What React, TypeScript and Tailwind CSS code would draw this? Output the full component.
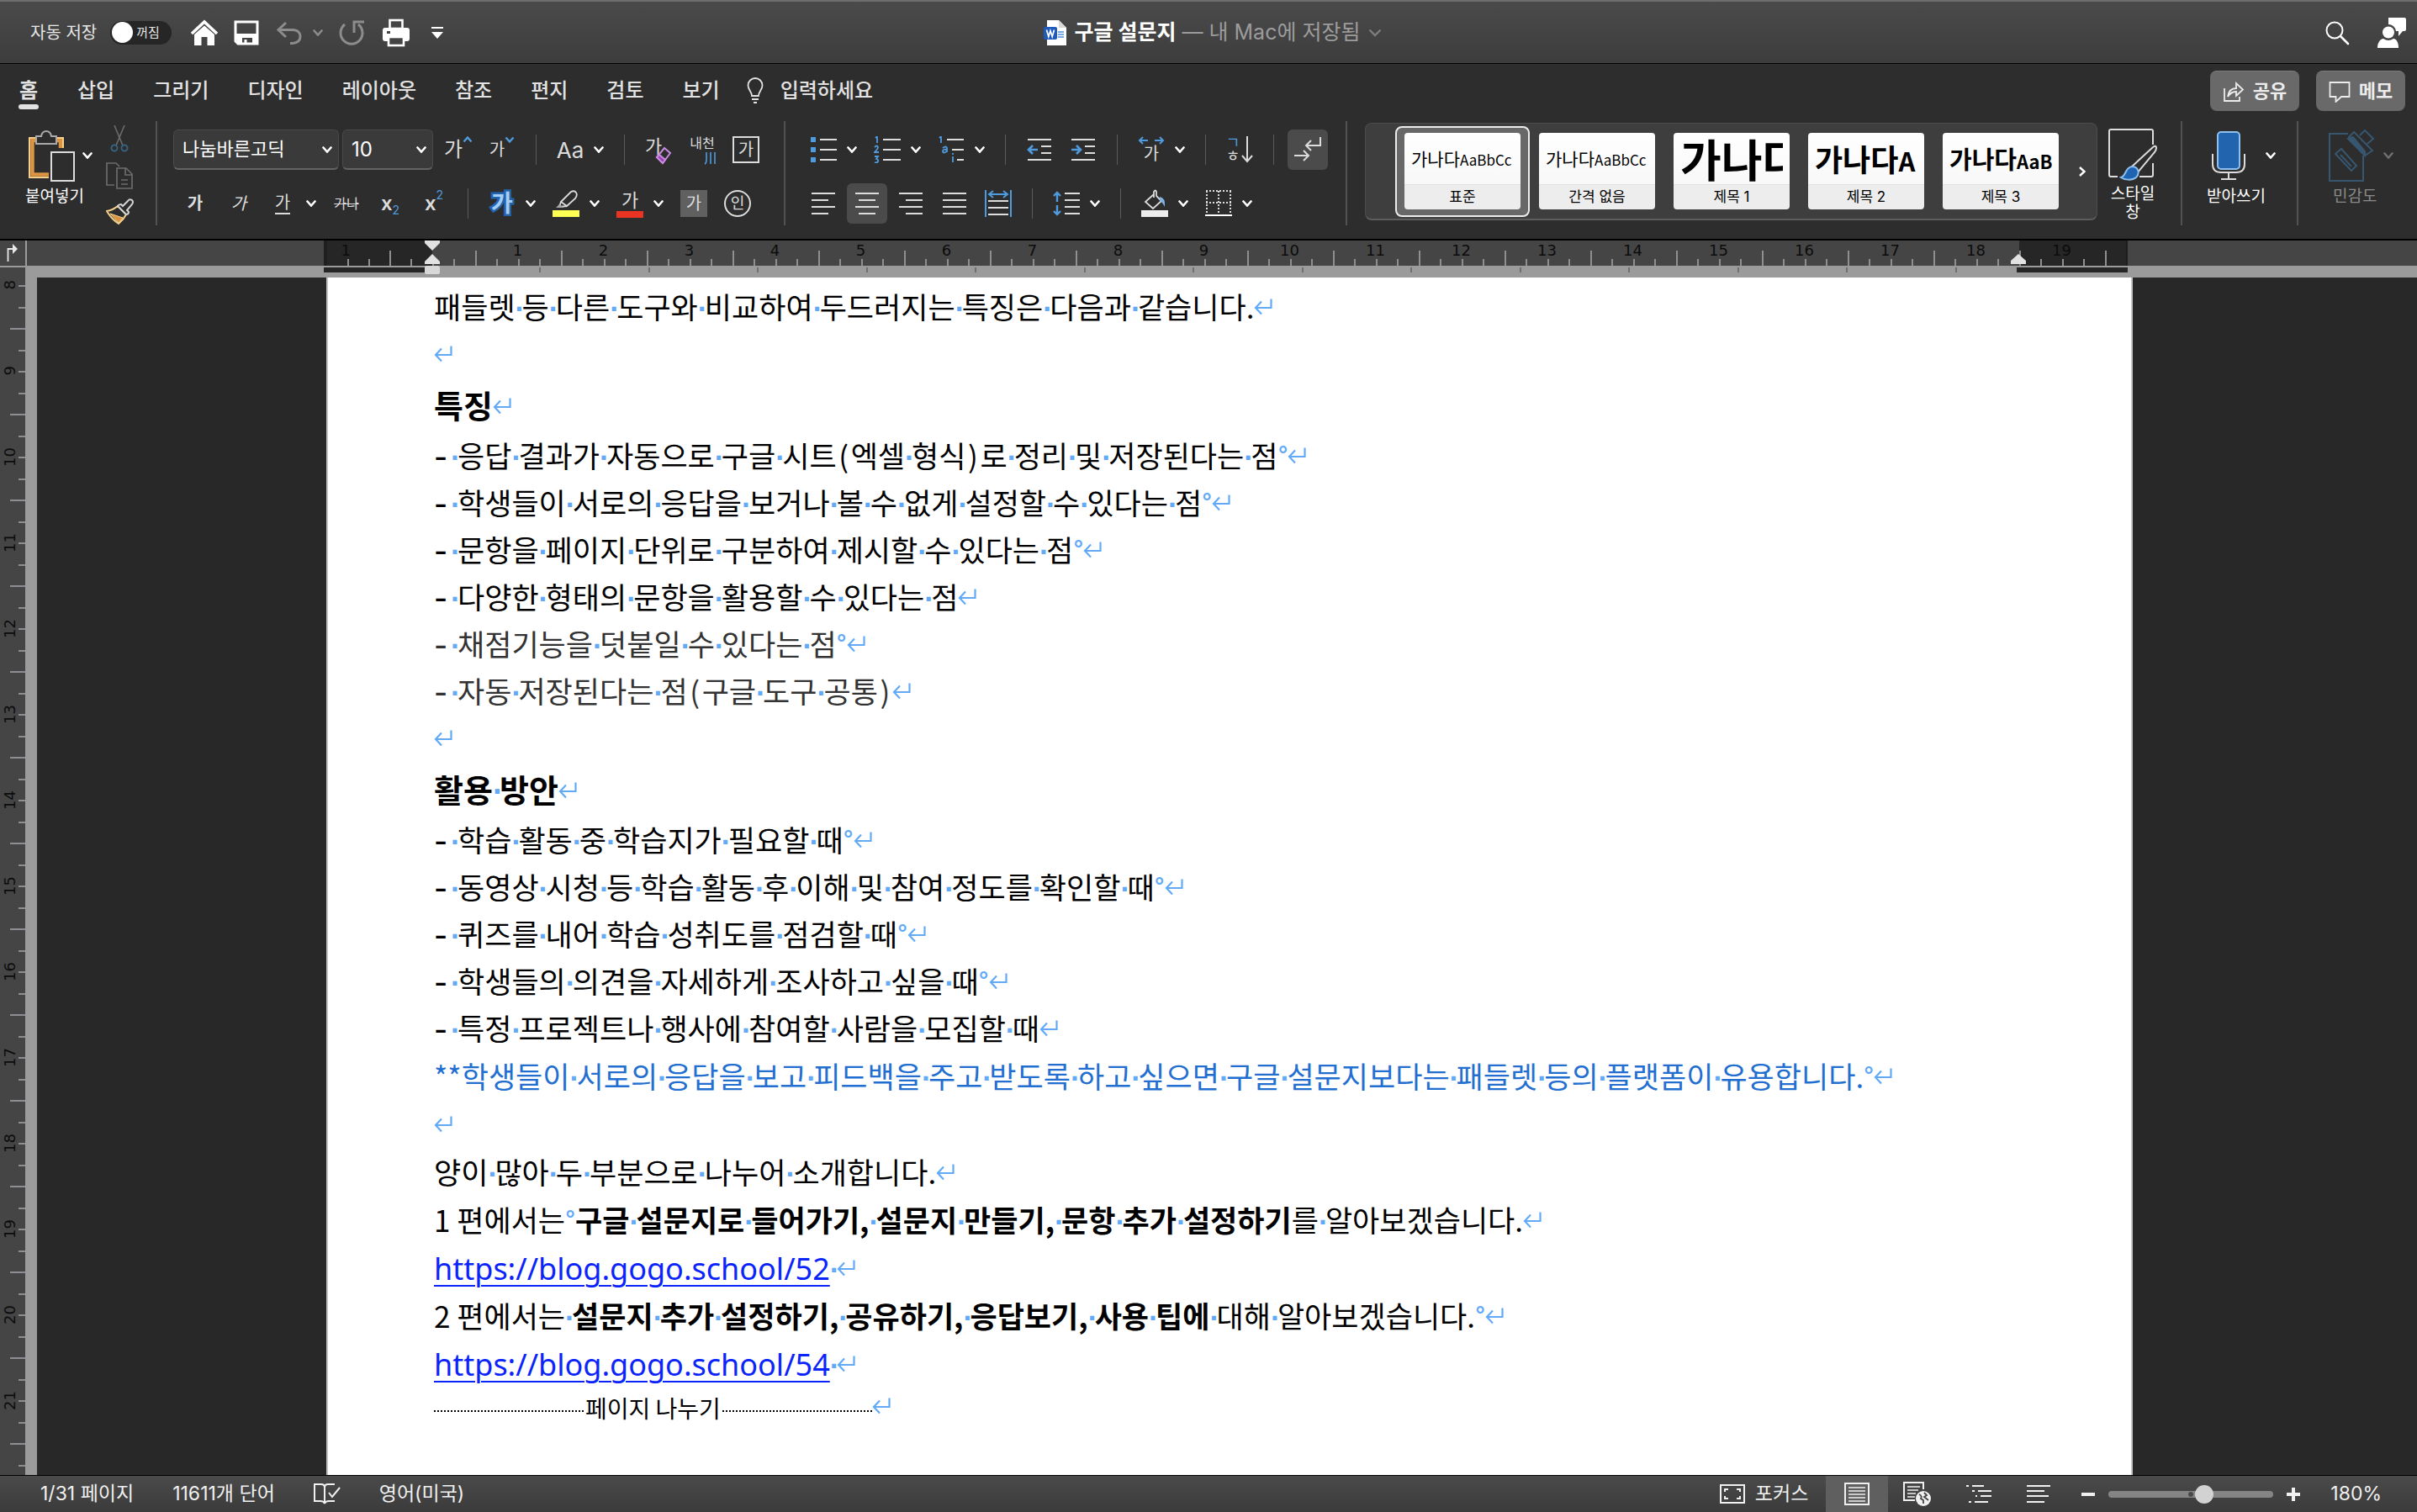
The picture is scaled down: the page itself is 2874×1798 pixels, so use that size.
import React from "react";

const UI_FONT = "font-['Inter','Noto_Sans_CJK_KR',sans-serif]";
const DOC_FONT = "font-['Noto_Sans_CJK_KR','Noto_Sans',sans-serif]";

type IconProps = {
  w: number;
  h: number;
  children: React.ReactNode;
  className?: string;
};

const Icon: React.FC<IconProps> = ({ w, h, children, className = "" }) => (
  <svg
    width={w}
    height={h}
    viewBox={`0 0 ${w} ${h}`}
    fill="none"
    stroke="currentColor"
    strokeWidth={2}
    className={`shrink-0 ${className}`}
    aria-hidden="true"
  >
    {children}
  </svg>
);

const Chevron: React.FC<{ className?: string }> = ({ className = "text-white" }) => (
  <Icon w={12} h={8} className={className}>
    <path d="M1.5 1.5 6 6.5 10.5 1.5" strokeWidth={2.6} strokeLinecap="round" />
  </Icon>
);

/* ---------- Title bar ---------- */

const TitleBar: React.FC = () => (
  <header className="grid h-[76px] shrink-0 grid-cols-[1fr_auto_1fr] items-center border-t-2 border-b border-t-[#6e6e6e] border-b-black bg-linear-to-b from-[#4a4a4a] to-[#3d3d3d] px-3">
    <div className="flex items-center pl-6 text-white">
      <label className="flex items-center gap-4 text-xl text-[#e6e6e6]">
        자동 저장
        <input type="checkbox" className="peer sr-only" />
        <span className="flex h-7 w-[73px] items-center gap-1 rounded-full bg-[#262626] px-0.5">
          <span className="h-[25px] w-[25px] rounded-full bg-white" />
          <span className="text-[15px]">꺼짐</span>
        </span>
      </label>
      <button className="ml-[22px]" aria-label="홈">
        <Icon w={34} h={32}>
          <path d="M2 17 17 3 32 17" strokeWidth={3.5} />
          <path d="M5 18 17 7.5 29 18V31H20.5V21H13.5V31H5Z" fill="currentColor" stroke="none" />
        </Icon>
      </button>
      <button className="ml-[18px]" aria-label="저장">
        <Icon w={30} h={30}>
          <path d="M2 2H28V28H5L2 25Z" strokeWidth={3} />
          <path d="M2 16H28V28H22V21H10V28H4Z" fill="currentColor" stroke="none" />
          <path d="M14 23V28" strokeWidth={3} />
        </Icon>
      </button>
      <button className="ml-5 text-[#8c8c8c]" aria-label="실행 취소">
        <Icon w={32} h={28}>
          <path d="M12 2 3 10.5 12 19M3 10.5H20C26 10.5 29 14 29 18.5C29 23 26 26 20 26.5H17" strokeWidth={3} />
        </Icon>
      </button>
      <button className="ml-3" aria-label="실행 취소 목록">
        <Chevron className="text-[#8c8c8c]" />
      </button>
      <button className="ml-[18px] text-[#8c8c8c]" aria-label="다시 실행">
        <Icon w={32} h={32}>
          <path d="M8 6A13 13 0 1 0 24 6" strokeWidth={3} />
          <path d="M19 16V3H31" strokeWidth={3} />
        </Icon>
      </button>
      <button className="ml-5" aria-label="인쇄">
        <Icon w={34} h={34}>
          <rect x="9.5" y="2" width="15" height="10" strokeWidth={2.6} />
          <rect x="1" y="11" width="32" height="16" rx="3" fill="currentColor" stroke="none" />
          <rect x="8" y="22" width="18" height="10" fill="#444" strokeWidth={2.6} />
          <rect x="6" y="15" width="4" height="3" fill="#444" stroke="none" />
        </Icon>
      </button>
      <button className="ml-6" aria-label="도구 모음 사용자 지정">
        <Icon w={16} h={16}>
          <path d="M1 2H15" />
          <path d="M1 7H15L8 15Z" fill="currentColor" stroke="none" />
        </Icon>
      </button>
    </div>

    <div className="ml-2.5 flex items-center gap-2.5">
      <svg width="27" height="30" viewBox="0 0 27 30" aria-hidden="true">
        <path d="M4 0H18L27 9V30H4Z" fill="#fff" />
        <path d="M18 0V9H27Z" fill="#d8d8d8" />
        <path d="M17 14H24M17 17H24M17 20H24" stroke="#4a8fdc" strokeWidth="1.3" />
        <rect y="8" width="16" height="15" rx="2" fill="#1e5bbd" />
        <path d="M3.5 11.5 5.8 19.5 8 12.5 10.2 19.5 12.5 11.5" fill="none" stroke="#fff" strokeWidth="1.7" />
      </svg>
      <h1 className="text-[25px]">
        <span className="font-bold text-white">구글 설문지</span>
        <span className="text-[#9c9c9c]"> — 내 Mac에 저장됨</span>
      </h1>
      <button aria-label="문서 이름">
        <Icon w={16} h={10} className="text-[#7e7e7e]">
          <path d="M1.5 1.5 8 8 14.5 1.5" strokeWidth={2.4} />
        </Icon>
      </button>
    </div>

    <div className="flex items-center justify-end gap-8 text-white">
      <button aria-label="검색">
        <Icon w={30} h={30}>
          <circle cx="12" cy="12" r="9.5" />
          <path d="M19 19 28 28" strokeWidth={2.6} strokeLinecap="round" />
        </Icon>
      </button>
      <button aria-label="계정">
        <Icon w={36} h={38}>
          <path d="M14 1H33Q35 1 35 3V15Q35 17 33 17H31L26 23V17H23A9 9 0 0 0 14 9Z" fill="currentColor" stroke="none" />
          <circle cx="14" cy="18.5" r="7" fill="currentColor" stroke="none" />
          <path d="M1 37C1 31 4 26.5 8 26Q14 30 20 26C24 26.5 26 31 26 37Z" fill="currentColor" stroke="none" />
        </Icon>
      </button>
    </div>
  </header>
);

/* ---------- Tabs ---------- */

const TABS = ["홈", "삽입", "그리기", "디자인", "레이아웃", "참조", "편지", "검토", "보기"];

const TabRow: React.FC = () => (
  <div className="flex h-16 items-end justify-between pr-3.5 pl-[22px]">
    <nav className="flex items-start gap-[46px] text-2xl font-medium text-[#e2e2e2]">
      {TABS.map((tab, i) => (
        <button key={tab} className="flex h-12 flex-col items-center">
          <span className={i === 0 ? "font-bold" : ""}>{tab}</span>
          {i === 0 && <span className="h-1.5 w-6 rounded-full bg-[#e2e2e2]" />}
        </button>
      ))}
      <button className="-ml-3.5 flex h-12 items-start gap-5">
        <Icon w={20} h={32}>
          <path d="M6 22C6 17 1.5 15 1.5 9.5A8.5 8.5 0 0 1 18.5 9.5C18.5 15 14 17 14 22Z" strokeWidth={1.8} />
          <path d="M6 26H14M8 30H12" strokeWidth={1.8} />
        </Icon>
        <span>입력하세요</span>
      </button>
    </nav>
    <div className="mb-2 flex gap-5 text-[22px] font-bold text-[#ececec]">
      <button className="flex h-12 w-[106px] items-center justify-center gap-2.5 rounded-lg border-t border-[#7c7c7c] bg-[#696969]">
        <Icon w={26} h={26}>
          <path d="M2 9V24H20V19" strokeWidth={1.8} />
          <path d="M6 19C7 12 11 9 16 9V3L24 10.5 16 18V13C12 13 9 14 6 19Z" strokeWidth={1.8} />
        </Icon>
        공유
      </button>
      <button className="flex h-12 w-[106px] items-center justify-center gap-2.5 rounded-lg border-t border-[#7c7c7c] bg-[#696969]">
        <Icon w={26} h={26}>
          <path d="M1.5 2H24.5V19H15L8.5 25V19H1.5Z" strokeWidth={1.8} />
        </Icon>
        메모
      </button>
    </div>
  </div>
);

/* ---------- Ribbon ---------- */

const GroupRule = () => <span className="mx-[19px] h-[124px] w-0.5 shrink-0 bg-[#525252]" />;
const Rule = () => <span className="mx-3.5 h-9 w-px shrink-0 bg-[#5a5a5a]" />;

type ToolProps = { label: string; children: React.ReactNode; active?: boolean };

const Tool: React.FC<ToolProps> = ({ label, children, active }) => (
  <button aria-label={label} className="flex h-12 w-[52px] shrink-0 items-center justify-center">
    <span
      className={
        active
          ? "flex h-12 w-12 items-center justify-center rounded-md bg-[#4b4b4b]"
          : "flex items-center justify-center"
      }
    >
      {children}
    </span>
  </button>
);

const SplitTool: React.FC<ToolProps> = ({ label, children }) => (
  <button aria-label={label} className="flex h-12 w-[76px] shrink-0 items-center gap-3 pl-2.5">
    <span className="flex w-8 shrink-0 items-center justify-center">{children}</span>
    <Chevron />
  </button>
);

const BLUE = "#4f9bdd";

const ClipboardGroup: React.FC = () => (
  <div className="flex h-[124px] items-start pr-1.5 pl-[30px]">
    <button className="flex w-[74px] flex-col items-start pt-2 text-[19px] leading-6 text-white">
      <span className="flex h-[66px] items-center gap-2 pl-1">
        <Icon w={56} h={62}>
          <path d="M10 10H1V57H24" stroke="#f5d08c" />
          <path d="M10 13H4.5V53.5H24" stroke="#dc9443" strokeWidth={4.5} />
          <path d="M33 13H38V22" stroke="#dc9443" strokeWidth={4.5} />
          <path d="M33 10H41V22" stroke="#f5d08c" />
          <path d="M9 8H15Q16 2 21 2T27 8H33V17H9Z" fill="#2d2d2d" stroke="#a9a9a9" />
          <rect x="27" y="27" width="27" height="34" fill="#2d2d2d" stroke="#dcdcdc" />
        </Icon>
        <Chevron />
      </span>
      <span className="pt-1">붙여넣기</span>
    </button>
    <div className="ml-[22px] flex flex-col gap-2.5 pt-1">
      <button aria-label="잘라내기">
        <Icon w={32} h={34}>
          <path d="M10 1 20 25M22 1 12 25" stroke="#6c6c6c" strokeWidth={1.6} />
          <circle cx="10" cy="28" r="3.5" stroke="#36617f" />
          <circle cx="22" cy="28" r="3.5" stroke="#36617f" />
        </Icon>
      </button>
      <button aria-label="복사" className="text-[#6c6c6c]">
        <Icon w={32} h={34}>
          <path d="M10 28H1V2H12L16 6" strokeWidth={1.7} />
          <path d="M13 8H24L31 15V32H13ZM23 8V16H31M18 22H26M18 27H26" strokeWidth={1.7} />
        </Icon>
      </button>
      <button aria-label="서식 복사">
        <Icon w={34} h={32}>
          <path d="M14 9Q8 14 1 15Q7 25 15 30Q21 25 24 19Z" fill="#2d2d2d" stroke="#f5d08c" />
          <path d="M5 18 20 23 15 29Z" fill="#dc9443" stroke="#f5d08c" strokeWidth={1} />
          <path d="M14 9 24 19Q27 19 27 16L25 14 31 7Q33 4 31 2Q28 0 26 3L20 9 18 7Q15 7 14 9Z" fill="#2d2d2d" stroke="#d4d4d4" />
        </Icon>
      </button>
    </div>
  </div>
);

const FontGroup: React.FC = () => (
  <div className="flex h-[124px] flex-col gap-[22px] pt-2.5 text-[#dcdcdc]">
    <div className="flex h-12 items-center">
      <span className="relative">
        <select
          aria-label="글꼴"
          className="h-12 w-[197px] appearance-none rounded-md border border-b-2 border-[#4a4a4a] border-b-[#636363] bg-[#3a3a3a] pl-2.5 text-[22px] text-white"
        >
          <option>나눔바른고딕</option>
        </select>
        <span className="pointer-events-none absolute top-5 right-2">
          <Chevron />
        </span>
      </span>
      <span className="relative mx-1">
        <select
          aria-label="글꼴 크기"
          className="h-12 w-[108px] appearance-none rounded-md border border-b-2 border-[#4a4a4a] border-b-[#636363] bg-[#3a3a3a] pl-2.5 text-2xl text-white"
        >
          <option>10</option>
        </select>
        <span className="pointer-events-none absolute top-5 right-2">
          <Chevron />
        </span>
      </span>
      <Tool label="글꼴 크게">
        <span className="text-2xl leading-8">가</span>
        <Icon w={12} h={8} className="mb-6">
          <path d="M1.5 6.5 6 1.5 10.5 6.5" stroke={BLUE} strokeWidth={2.4} />
        </Icon>
      </Tool>
      <Tool label="글꼴 작게">
        <span className="text-xl leading-8">가</span>
        <Icon w={12} h={8} className="mb-6">
          <path d="M1.5 1.5 6 6.5 10.5 1.5" stroke={BLUE} strokeWidth={2.4} />
        </Icon>
      </Tool>
      <Rule />
      <SplitTool label="대/소문자 바꾸기">
        <span className="text-[26px]">Aa</span>
      </SplitTool>
      <Rule />
      <Tool label="서식 지우기">
        <span className="relative flex h-9 w-8 items-start justify-start text-[22px] leading-7">
          가
          <span className="absolute right-0 bottom-0">
            <Icon w={20} h={22}>
              <path d="M11 2 18 8 9 20 2 13Z" fill="#2d2d2d" stroke="#c98be0" />
              <path d="M5 10 12 16 9 20 2 13Z" fill="#9b3fb5" stroke="#c98be0" />
            </Icon>
          </span>
        </span>
      </Tool>
      <Tool label="윗주">
        <span className="relative flex h-9 w-8 items-start justify-center text-base leading-5">
          내천
          <span className="absolute right-0 bottom-0">
            <Icon w={14} h={15}>
              <path d="M3 0V9Q3 13 1 14M8 0V14M13 0V14" stroke={BLUE} strokeWidth={1.6} />
            </Icon>
          </span>
        </span>
      </Tool>
      <Tool label="문자 테두리">
        <span className="flex h-8 w-8 items-center justify-center border-2 border-[#dcdcdc] text-xl leading-7">가</span>
      </Tool>
    </div>
    <div className="flex h-9 items-center text-xl">
      <Tool label="굵게">
        <span className="font-bold">가</span>
      </Tool>
      <Tool label="기울임꼴">
        <span className="italic">가</span>
      </Tool>
      <SplitTool label="밑줄">
        <span className="border-b-2 border-[#dcdcdc] leading-6">가</span>
      </SplitTool>
      <Tool label="취소선">
        <span className="text-base line-through">가나</span>
      </Tool>
      <Tool label="아래 첨자">
        <span className="text-2xl leading-8 font-semibold">x</span>
        <span className="mt-4 text-sm text-[#4f9bdd]">2</span>
      </Tool>
      <Tool label="위 첨자">
        <span className="text-2xl leading-8 font-semibold">x</span>
        <span className="mb-5 text-sm text-[#4f9bdd]">2</span>
      </Tool>
      <Rule />
      <SplitTool label="텍스트 효과">
        <span className="text-[28px] leading-8 font-bold text-[#a5cdf5] [paint-order:stroke_fill] [-webkit-text-stroke:5px_#2264ae]">
          가
        </span>
      </SplitTool>
      <SplitTool label="텍스트 강조 색">
        <Icon w={32} h={34}>
          <path d="M10 15 22 3Q26 1 28 4Q30 7 27 11L17 20ZM10 15 8 21 17 20" strokeWidth={1.8} />
          <path d="M8 18 14 22H4Z" fill="#a9a9a9" stroke="none" />
          <rect y="25" width="32" height="8" fill="#ffff54" stroke="none" />
        </Icon>
      </SplitTool>
      <SplitTool label="글꼴 색">
        <span className="flex flex-col items-center">
          <span className="text-[22px] leading-[25px]">가</span>
          <span className="h-2 w-8 bg-[#ea3323]" />
        </span>
      </SplitTool>
      <Tool label="문자 음영">
        <span className="flex h-8 w-8 items-center justify-center bg-[#606060]">가</span>
      </Tool>
      <Tool label="원 문자">
        <span className="flex h-8 w-8 items-center justify-center rounded-full border-2 border-[#dcdcdc] text-lg leading-7">
          인
        </span>
      </Tool>
    </div>
  </div>
);

const ParagraphGroup: React.FC = () => (
  <div className="flex h-[124px] flex-col gap-[22px] pt-2.5 text-[#dcdcdc]">
    <div className="flex h-12 items-center">
      <SplitTool label="글머리 기호">
        <Icon w={32} h={32}>
          <path d="M1 4H7M1 16H7M1 28H7" stroke={BLUE} strokeWidth={6} />
          <path d="M12 4H32M12 16H32M12 28H32" />
        </Icon>
      </SplitTool>
      <SplitTool label="번호 매기기">
        <Icon w={32} h={32}>
          <path d="M2 2 4 0V8M1 13Q4 10 5 13Q5 15 1 19H6M1 24H5L3 27Q6 28 5 30T1 31" stroke={BLUE} strokeWidth={1.8} />
          <path d="M11 4H32M11 16H32M11 28H32" />
        </Icon>
      </SplitTool>
      <SplitTool label="다단계 목록">
        <Icon w={32} h={32}>
          <path d="M2 2 4 0V8M6 14Q10 11 11 14V19M11 16Q6 15 6 18T11 18M18 24V31M18 20V22" stroke={BLUE} strokeWidth={1.8} />
          <path d="M11 4H31M17 16H31M23 28H31" />
        </Icon>
      </SplitTool>
      <Rule />
      <Tool label="내어쓰기">
        <Icon w={30} h={32}>
          <path d="M1 4H29M17 12H29M17 20H29M1 28H29" />
          <path d="M13 16H2M7 11 2 16 7 21" stroke={BLUE} strokeWidth={2.6} />
        </Icon>
      </Tool>
      <Tool label="들여쓰기">
        <Icon w={30} h={32}>
          <path d="M1 4H29M17 12H29M17 20H29M1 28H29" />
          <path d="M1 16H12M7 11 12 16 7 21" stroke={BLUE} strokeWidth={2.6} />
        </Icon>
      </Tool>
      <Rule />
      <SplitTool label="문자 간격">
        <span className="flex flex-col items-center">
          <Icon w={32} h={10}>
            <path d="M12 5H2M6 1 2 5 6 9M20 5H30M26 1 30 5 26 9" stroke={BLUE} />
          </Icon>
          <span className="text-xl leading-[22px]">가</span>
        </span>
      </SplitTool>
      <Rule />
      <Tool label="정렬">
        <span className="flex items-center gap-0.5">
          <span className="flex flex-col items-center text-lg leading-4">
            <span className="text-[#4f9bdd]">ㄱ</span>
            <span>ㅎ</span>
          </span>
          <Icon w={14} h={32}>
            <path d="M7 0V30M1 23 7 30 13 23" />
          </Icon>
        </span>
      </Tool>
      <Rule />
      <Tool label="편집 기호 표시" active>
        <Icon w={34} h={32}>
          <path d="M32 1V11H16M21 5 15 11 21 17" />
          <path d="M1 23H17M12 17 18 23 12 29" />
        </Icon>
      </Tool>
    </div>
    <div className="flex h-9 items-center">
      <Tool label="왼쪽 맞춤">
        <Icon w={28} h={28}>
          <path d="M0 2H28M0 10H20M0 18H28M0 26H20" />
        </Icon>
      </Tool>
      <Tool label="가운데 맞춤" active>
        <Icon w={28} h={28}>
          <path d="M0 2H28M4 10H24M0 18H28M4 26H24" />
        </Icon>
      </Tool>
      <Tool label="오른쪽 맞춤">
        <Icon w={28} h={28}>
          <path d="M0 2H28M8 10H28M0 18H28M8 26H28" />
        </Icon>
      </Tool>
      <Tool label="양쪽 맞춤">
        <Icon w={28} h={28}>
          <path d="M0 2H28M0 10H28M0 18H28M0 26H28" />
        </Icon>
      </Tool>
      <Tool label="균등 분할">
        <Icon w={32} h={32}>
          <path d="M1 0V32M31 0V32M5 5H27M10 1 5 5 10 9M22 1 27 5 22 9" stroke={BLUE} />
          <path d="M4 13H28M4 21H28M4 29H28" />
        </Icon>
      </Tool>
      <Rule />
      <SplitTool label="줄 간격">
        <Icon w={32} h={30}>
          <path d="M5 13V2M1 6 5 2 9 6M5 17V28M1 24 5 28 9 24" stroke={BLUE} strokeWidth={2.4} />
          <path d="M14 3H32M14 11H32M14 19H32M14 27H32" />
        </Icon>
      </SplitTool>
      <Rule />
      <SplitTool label="음영">
        <Icon w={32} h={34}>
          <path d="M15 6 5 15 14 23 24 14 18 8V3Q17 0 15 3V10" strokeWidth={1.8} />
          <path d="M22 9Q29 10 28 21Q25 15 22 14Z" fill="#7fb3e6" stroke="none" />
          <rect y="25" width="32" height="8" fill="#ededed" stroke="none" />
        </Icon>
      </SplitTool>
      <SplitTool label="테두리">
        <Icon w={32} h={32}>
          <path d="M1 1H31M1 15H31M2 1V28M16 1V28M30 1V28" strokeDasharray="2 2" />
          <path d="M0 30H32" stroke="#fff" />
        </Icon>
      </SplitTool>
    </div>
  </div>
);

const STYLES = [
  { name: "표준", ko: "text-[21px]", en: "text-[17px]", latin: "AaBbCc" },
  { name: "간격 없음", ko: "text-[21px]", en: "text-[17px]", latin: "AaBbCc" },
  { name: "제목 1", ko: "text-[53px] font-bold", en: "text-5xl", latin: "" },
  { name: "제목 2", ko: "text-4xl font-bold", en: "text-[31px]", latin: "A" },
  { name: "제목 3", ko: "text-[29px] font-bold", en: "text-[22px]", latin: "AaB" },
];

const StyleGallery: React.FC = () => (
  <div className="flex h-[116px] min-w-0 flex-1 items-center rounded-lg border border-b-2 border-[#4c4c4c] border-b-[#5d5d5d] bg-[#3e3e3e] pl-[35px]">
    <div className="flex">
      {STYLES.map((style, i) => (
        <button
          key={style.name}
          className={`flex h-[108px] w-40 items-center justify-center rounded-lg border-2 ${
            i === 0 ? "border-[#ececec] bg-[#686868]" : "border-transparent"
          }`}
        >
          <span className="flex w-[138px] flex-col overflow-hidden rounded-sm text-black">
            <span className={`${DOC_FONT} block h-[61px] bg-linear-to-b from-white to-[#f8f8f8] px-2`}>
              <span className={`block overflow-hidden text-left leading-[61px] whitespace-nowrap ${style.ko}`}>
                가나다
                <span className={style.en}>{style.latin}</span>
              </span>
            </span>
            <span className="flex h-[30px] items-center justify-center border-t border-[#e0e0e0] bg-[#ededed] text-[17px]">
              {style.name}
            </span>
          </span>
        </button>
      ))}
    </div>
    <button className="mr-3 ml-auto" aria-label="다음 스타일">
      <Icon w={10} h={14} className="text-white">
        <path d="M2 2 7.5 7 2 12" strokeWidth={2.4} />
      </Icon>
    </button>
  </div>
);

const Ribbon: React.FC = () => (
  <section className="shrink-0 border-b-2 border-black bg-[#2d2d2d]">
    <TabRow />
    <div className="flex h-36 items-start pt-1 pr-[18px]">
      <ClipboardGroup />
      <GroupRule />
      <FontGroup />
      <GroupRule />
      <ParagraphGroup />
      <GroupRule />
      <div className="ml-0.5 flex min-w-0 flex-1 pt-0.5">
        <StyleGallery />
      </div>
      <button className="mr-2 ml-3 flex w-[60px] flex-col items-center pt-2 text-[19px] leading-[22px] text-white">
        <Icon w={60} h={66}>
          <path d="M12 58H4Q2 58 2 56V4Q2 2 4 2H52Q54 2 54 4V20M54 42V56Q54 58 52 58H38" stroke="#dcdcdc" />
          <path d="M28 47 54 23Q58 20 58 24Q58 26 56 29L36 53Z" fill="#2d2d2d" stroke="#dcdcdc" />
          <path d="M16 59C22 58 21 46 30 46C38 47 38 55 34 59C29 63 20 62 16 59Z" fill="#1f63b3" stroke="#8fc0f0" />
        </Icon>
        <span className="pt-0.5">스타일</span>
        <span>창</span>
      </button>
      <GroupRule />
      <button className="flex w-[98px] flex-col items-start pt-2 pl-2.5 text-[19px] leading-6 text-white">
        <span className="flex h-[66px] items-center gap-6 pl-1.5">
          <Icon w={40} h={60}>
            <rect x="7" y="2" width="26" height="44" rx="4" fill="#2264ae" stroke="#8fc0f0" />
            <path d="M1 28V40Q1 50 11 50H29Q39 50 39 40V28M20 50V58M11 58H29" stroke="#dcdcdc" />
          </Icon>
          <Chevron />
        </span>
        <span className="pt-1">받아쓰기</span>
      </button>
      <GroupRule />
      <button className="flex w-[104px] flex-col items-start pt-2 pl-4 text-[19px] leading-6 text-[#8a8a8a]" disabled>
        <span className="flex h-[66px] items-center gap-2.5">
          <Icon w={56} h={64} className="text-[#37566f]">
            <path d="M24 6H2V62H42V32" />
            <path d="M9 30 16 24 34 44 28 50ZM15 31 28 45" />
            <path d="M25 10 31 4 53 26 44 32Z" />
            <path d="M24 12 30 10 44 27 44 32Z" fill="currentColor" />
            <path d="M38 8 44 2 54 12 47 18" />
          </Icon>
          <Chevron className="text-[#6f6f6f]" />
        </span>
        <span className="self-start pt-1 pl-1.5">민감도</span>
      </button>
    </div>
  </section>
);

/* ---------- Rulers ---------- */

const TICK = "flex-1 border-l-2 border-[#8f8f93]";

const RulerCell: React.FC<{ label: string; tone?: string }> = ({ label, tone = "" }) => (
  <div className={`relative flex h-full w-[102px] shrink-0 items-end ${tone}`}>
    <span className="absolute inset-x-0 top-1 text-center text-lg leading-4 text-[#0c0c0c]">{label}</span>
    <span className={`${TICK} h-[18px]`} />
    <span className={`${TICK} h-2`} />
    <span className={`${TICK} h-2`} />
    <span className={`${TICK} h-2`} />
  </div>
);

const IndentMarkers: React.FC = () => (
  <svg width="18" height="40" viewBox="0 0 18 40" className="absolute top-0 left-[42px] z-10" aria-hidden="true">
    <path d="M0 0H18V3L9 12 0 3Z" fill="#e2e2e2" />
    <path d="M9 16 18 25V28H0V25Z" fill="#e2e2e2" />
    <rect y="30" width="18" height="10" rx="2" fill="#d8d8d8" />
  </svg>
);

const HorizontalRuler: React.FC = () => (
  <div className="flex h-8 shrink-0 border-b-2 border-[#9b9b9b] bg-[#454545] font-['DejaVu_Sans',sans-serif]">
    <div className="flex w-8 shrink-0 items-center border-r-2 border-[#9b9b9b] pl-2">
      <Icon w={14} h={22} className="text-[#e8e8e8]">
        <path d="M1.5 21V6H8" strokeWidth={1.8} />
        <path d="M7 0 13 6 7 12Z" fill="currentColor" stroke="none" />
      </Icon>
    </div>
    <div className="flex min-w-0 flex-1 justify-center pl-2">
      <div className="flex w-[2145px] shrink-0">
        <div className="relative flex w-[78px] shrink-0 items-end border-l-4 border-[#1e1e1e] bg-[#262626]">
          <span className="absolute top-1 left-[17px] text-lg leading-4 text-[#0c0c0c]">1</span>
          <span className="h-2 w-6" />
          <span className={`${TICK} h-2`} />
          <span className={`${TICK} h-2`} />
        </div>
        <div className="relative">
          <RulerCell label="" tone="bg-linear-to-r from-[#262626] from-50% to-[#454545] to-50%" />
          <IndentMarkers />
        </div>
        {Array.from({ length: 18 }, (_, i) => (
          <RulerCell key={i} label={String(i + 1)} />
        ))}
        <div className="relative">
          <RulerCell label="19" tone="bg-[#262626]" />
          <svg width="18" height="13" viewBox="0 0 18 13" className="absolute top-4 -left-2.5 z-10" aria-hidden="true">
            <path d="M9 0 18 8V12H0V8Z" fill="#e2e2e2" />
          </svg>
        </div>
        <div className="flex flex-1 items-end border-r-2 border-[#1e1e1e] bg-[#262626]">
          <span className={`${TICK} h-[18px]`} />
        </div>
      </div>
    </div>
  </div>
);

const TabStopStrip: React.FC = () => (
  <div className="flex h-3 shrink-0 justify-center overflow-hidden pl-2.5">
    <div className="flex h-1.5 w-[2145px] shrink-0">
      <span className="w-[129px] bg-[#262626]" />
      <div className="grid w-[1813px] grid-cols-14">
        {Array.from({ length: 14 }, (_, i) => (
          <span key={i} className="border-r-2 border-[#6f6f6f]" />
        ))}
      </div>
      <span className="w-[71px]" />
      <span className="flex-1 bg-[#262626]" />
    </div>
  </div>
);

const VerticalRuler: React.FC = () => (
  <div className="w-[30px] shrink-0 overflow-hidden bg-[#454545] font-['DejaVu_Sans',sans-serif]">
    <div className="-mt-[30px]">
      {Array.from({ length: 15 }, (_, i) => (
        <div key={i} className="flex h-[102px]">
          <span className="flex w-3 items-center">
            <span className="rotate-180 text-lg leading-6 text-[#0c0c0c] [writing-mode:vertical-rl]">{i + 8}</span>
          </span>
          <span className="flex flex-1 flex-col items-end">
            <span className="w-[18px] flex-1 border-t-2 border-[#8f8f93]" />
            <span className="w-2 flex-1 border-t-2 border-[#8f8f93]" />
            <span className="w-2 flex-1 border-t-2 border-[#8f8f93]" />
            <span className="w-2 flex-1 border-t-2 border-[#8f8f93]" />
          </span>
        </div>
      ))}
    </div>
  </div>
);

/* ---------- Document ---------- */

const MARK = "inline-block text-center font-['Liberation_Sans'] font-bold leading-none text-[#62aaf7]";

const ReturnMark: React.FC = () => (
  <svg width="23" height="24" viewBox="0 0 23 24" fill="none" className="inline-block align-baseline" aria-hidden="true">
    <path d="M20.5 0.5V11H2.5M9 3.5 2 11 9 18.5" stroke="#62aaf7" strokeWidth="2.2" />
  </svg>
);

// Word shows a middle dot for a space and a ring for a non-breaking space.
const Marked: React.FC<{ text: string }> = ({ text }) => (
  <>
    {text.split(/([·°()-])/).map((part, i) => {
      switch (part) {
        case "·":
          return (
            <span key={i} className={`${MARK} w-2`}>
              ·
            </span>
          );
        case "°":
          return (
            <span key={i} className={`${MARK} w-3 align-[6px] text-[28px]`}>
              °
            </span>
          );
        case "-":
          return (
            <span key={i} className="inline-block w-5 font-['Inter'] leading-none font-medium">
              -
            </span>
          );
        case "(":
        case ")":
          return (
            <span key={i} className="inline-block w-[17px] text-center leading-none">
              {part}
            </span>
          );
        default:
          return part;
      }
    })}
  </>
);

const Line: React.FC<{ text?: string; className?: string; children?: React.ReactNode }> = ({
  text = "",
  className = "",
  children,
}) => (
  <p className={className}>
    <Marked text={text} />
    {children}
    <ReturnMark />
  </p>
);

const Heading: React.FC<{ text: string }> = ({ text }) => (
  <h2 className="text-[38px] leading-[65px] font-bold">
    <Marked text={text} />
    <ReturnMark />
  </h2>
);

const FEATURES = [
  "-·응답·결과가·자동으로·구글·시트(엑셀·형식)로·정리·및·저장된다는·점°",
  "-·학생들이·서로의·응답을·보거나·볼·수·없게·설정할·수·있다는·점°",
  "-·문항을·페이지·단위로·구분하여·제시할·수·있다는·점°",
  "-·다양한·형태의·문항을·활용할·수·있다는·점",
];

const EXTRA_FEATURES = ["-·채점기능을·덧붙일·수·있다는·점°", "-·자동·저장된다는·점(구글·도구·공통)"];

const USES = [
  "-·학습·활동·중·학습지가·필요할·때°",
  "-·동영상·시청·등·학습·활동·후·이해·및·참여·정도를·확인할·때°",
  "-·퀴즈를·내어·학습·성취도를·점검할·때°",
  "-·학생들의·의견을·자세하게·조사하고·싶을·때°",
  "-·특정·프로젝트나·행사에·참여할·사람을·모집할·때",
];

const BreakLine = () => <span className="mt-2 w-[178px] border-t-2 border-dotted border-black" />;

const BlogLink: React.FC<{ href: string }> = ({ href }) => (
  <p>
    <a
      href={href}
      className="font-['Noto_Sans',sans-serif] text-4xl leading-none text-[#0b24fb] underline decoration-2 underline-offset-[6px]"
    >
      {href}
    </a>
    <Marked text="·" />
    <ReturnMark />
  </p>
);

const Page: React.FC = () => (
  <article
    className={`${DOC_FONT} w-[2148px] shrink-0 border-x-2 border-[#c4c4c4] bg-white pt-1.5 pl-[126px] text-[35px] leading-[56px] whitespace-nowrap text-black`}
  >
    <Line text="패들렛·등·다른·도구와·비교하여·두드러지는·특징은·다음과·같습니다." />
    <Line />
    <Heading text="특징" />
    {FEATURES.map((text) => (
      <Line key={text} text={text} />
    ))}
    {EXTRA_FEATURES.map((text) => (
      <Line key={text} text={text} className="text-[#333]" />
    ))}
    <Line />
    <Heading text="활용·방안" />
    {USES.map((text) => (
      <Line key={text} text={text} />
    ))}
    <div className="leading-[57px]">
      <Line
        className="text-[#236fd1]"
        text="**학생들이·서로의·응답을·보고·피드백을·주고·받도록·하고·싶으면·구글·설문지보다는·패들렛·등의·플랫폼이·유용합니다.°"
      />
      <Line />
      <Line text="양이·많아·두·부분으로·나누어·소개합니다." />
      <Line text="1 편에서는°">
        <b>
          <Marked text="구글·설문지로·들어가기,·설문지·만들기,·문항·추가·설정하기" />
        </b>
        <Marked text="를·알아보겠습니다." />
      </Line>
      <BlogLink href="https://blog.gogo.school/52" />
      <Line text="2 편에서는·">
        <b>
          <Marked text="설문지·추가·설정하기,·공유하기,·응답보기,·사용·팁에" />
        </b>
        <Marked text="·대해·알아보겠습니다.°" />
      </Line>
      <BlogLink href="https://blog.gogo.school/54" />
    </div>
    <div className="flex h-[50px] items-center text-[28px]">
      <BreakLine />
      <span className="px-0.5">페이지 나누기</span>
      <BreakLine />
      <ReturnMark />
    </div>
  </article>
);

const Workspace: React.FC = () => (
  <main className="flex min-h-0 flex-1">
    <VerticalRuler />
    <div className="flex min-w-0 flex-1 flex-col bg-[#9b9b9b]">
      <TabStopStrip />
      <div className="ml-3.5 flex min-h-0 flex-1 justify-center overflow-hidden bg-[#282828] pl-1.5">
        <Page />
      </div>
    </div>
  </main>
);

/* ---------- Status bar ---------- */

const StatusBar: React.FC = () => (
  <footer className="flex h-11 shrink-0 items-center border-t border-black bg-linear-to-b from-[#4a4a4a] to-[#3b3b3b] pr-[42px] pl-12 text-[23px] text-[#f0f0f0]">
    <button>1/31 페이지</button>
    <button className="ml-[46px]">11611개 단어</button>
    <button className="ml-[46px]" aria-label="맞춤법 검사">
      <Icon w={32} h={28}>
        <path d="M13 25Q12 22 8 22H1V2H9Q13 2 13 6V25Q14 22 18 22H25M13 6Q13 2 17 2H25" />
        <path d="M18 12 22 17 31 6" />
      </Icon>
    </button>
    <button className="ml-[46px]">영어(미국)</button>

    <div className="ml-auto flex h-full items-center">
      <button className="flex items-center gap-3">
        <Icon w={30} h={24}>
          <rect x="1" y="1" width="28" height="21" />
          <path d="M6 9V6H10M20 6H24V9M24 14V17H20M10 17H6V14" />
        </Icon>
        포커스
      </button>
      <button aria-label="인쇄 모양" className="ml-[21px] flex h-full w-[74px] items-center justify-center bg-[#5f5f5f]">
        <Icon w={30} h={28}>
          <rect x="1" y="1" width="28" height="25" />
          <path d="M5 6H25M5 10H25M5 14H25M5 18H25M5 22H25" strokeWidth={1.6} />
        </Icon>
      </button>
      <button aria-label="웹 모양" className="ml-[18px]">
        <Icon w={34} h={30}>
          <path d="M14 22H1V1H24V9" />
          <path d="M5 6H20M5 10H18M5 14H15M5 18H14" strokeWidth={1.6} />
          <circle cx="24" cy="20" r="9" fill="currentColor" stroke="none" />
          <path d="M19 15Q23 17 21 20L24 22V26M25 13 28 16 25 18 30 22" stroke="#444" strokeWidth={1.8} />
        </Icon>
      </button>
      <button aria-label="개요" className="ml-10">
        <Icon w={32} h={24}>
          <path d="M1 2H4M8 2H22M8 8H11M15 8H31M12 14H14M18 14H31M4 21H7M11 21H27" />
        </Icon>
      </button>
      <button aria-label="초안" className="ml-10">
        <Icon w={30} h={24}>
          <path d="M1 2H29M1 8H22M1 14H27M1 21H22" />
        </Icon>
      </button>
      <button aria-label="축소" className="ml-9">
        <Icon w={16} h={16}>
          <path d="M0 8H16" strokeWidth={4} />
        </Icon>
      </button>
      <span className="relative ml-4 flex items-center">
        <input
          type="range"
          aria-label="확대/축소"
          min={10}
          max={290}
          defaultValue={176}
          className="h-2 w-[196px] appearance-none rounded-full bg-[#858585] [&::-webkit-slider-thumb]:h-[22px] [&::-webkit-slider-thumb]:w-[22px] [&::-webkit-slider-thumb]:appearance-none [&::-webkit-slider-thumb]:rounded-full [&::-webkit-slider-thumb]:bg-[#d2d2d2]"
        />
        <span className="pointer-events-none absolute left-[95px] h-1.5 w-1.5 rounded-full bg-[#4a4a4a]" />
      </span>
      <button aria-label="확대" className="ml-4">
        <Icon w={16} h={16}>
          <path d="M0 8H16M8 0V16" strokeWidth={4} />
        </Icon>
      </button>
      <button className="ml-9">180%</button>
    </div>
  </footer>
);

const App: React.FC = () => {
  return (
    <div className={`${UI_FONT} flex h-screen flex-col overflow-hidden bg-[#282828]`}>
      <TitleBar />
      <Ribbon />
      <HorizontalRuler />
      <Workspace />
      <StatusBar />
    </div>
  );
};

export default App;
